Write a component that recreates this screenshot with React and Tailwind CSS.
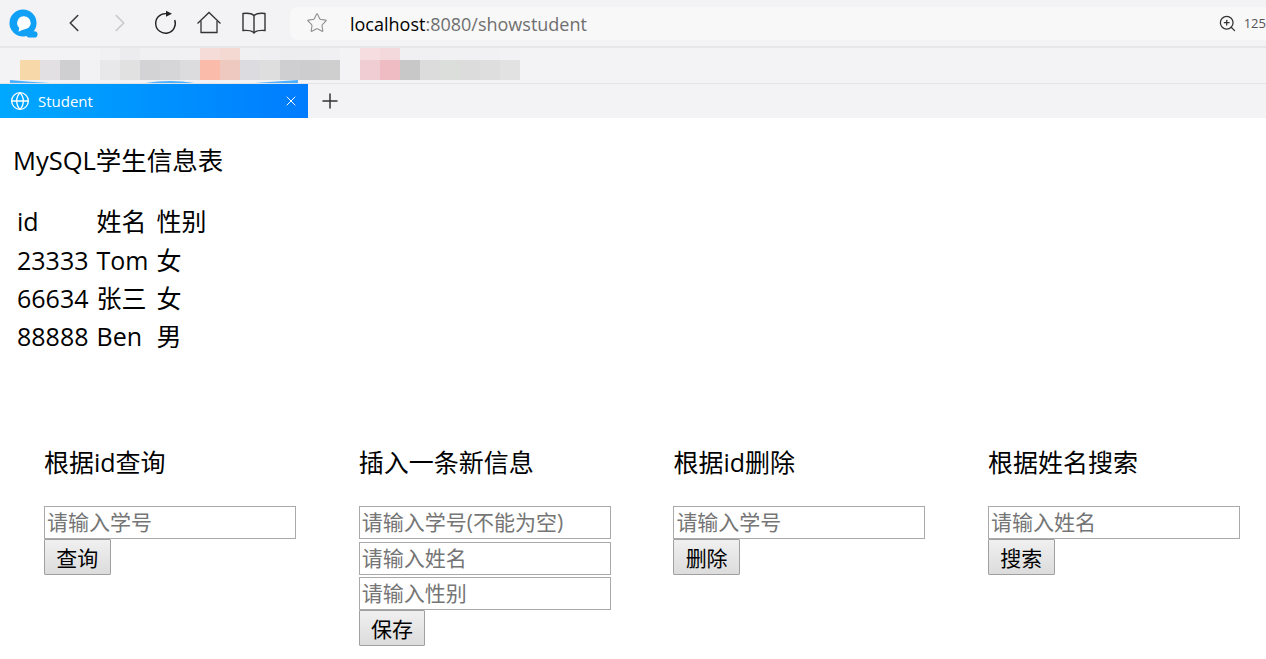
import { Globe, X, Plus, ChevronLeft, ChevronRight, Star, ZoomIn } from "lucide-react";

const FONT = "font-['Open_Sans','Noto_Sans_CJK_SC',sans-serif]";

const rows = [
  ["id", "姓名", "性别"],
  ["23333", "Tom", "女"],
  ["66634", "张三", "女"],
  ["88888", "Ben", "男"],
];

// blurred bookmarks: 20px mosaic blocks
const leftBlocks = ["#f7d8a8", "#e2e0e3", "#cfcfd1", "#f2f2f4", "#e8e8ea", "#e1e1e2", "#d3d3d5", "#d6d6d8", "#dcdcde", "#fabbaa", "#eec9bf", "#dcdce0", "#dedede", "#cfcfd1", "#cdcdcf", "#cfcfd0"];
const rightBlocks = ["#f0cdd3", "#eebcc2", "#c8c8c8", "#dcdcdc", "#dcdedc", "#dcdcdc", "#dedede", "#e2e2e3"];
const paleBlocks = ["#f3f3f5", "#f3f3f5", "#f3f3f5", "#f3f3f5", "#f1f1f3", "#ececee", "#f0f0f2", "#f0f0f2", "#f1f1f3", "#f5dcd8", "#f3d9d2", "#f0f0f2", "#efeff1", "#ededef", "#ededef", "#f0f0f2", "#f3f3f5", "#f5dde0", "#f3d8dc", "#f0f0f2", "#f0f0f2", "#f1f1f3", "#f1f1f3", "#f1f1f3", "#f2f2f4"];

const Panel = ({ title, fields, button }) => (
  <div className="w-[314.7px] shrink-0">
    <h2 className="text-[25px] leading-[34px] text-black">{title}</h2>
    <div className="mt-[27px] flex flex-col items-start">
      {fields.map((placeholder, i) => (
        <input
          key={placeholder}
          placeholder={placeholder}
          className={`w-[252px] h-[33px] border border-[#a9a9a9] bg-white px-[2px] pb-[1px] text-[21px] text-black placeholder:text-[#757575] outline-none ${i > 0 ? "mt-[2.5px]" : ""}`}
        />
      ))}
      <button className="h-[36px] w-[66.500px] pt-[2px] border border-[#a0a0a0] rounded-[1px] bg-gradient-to-b from-[#f0f0f0] to-[#dcdcdc] text-[21px] leading-none text-black">
        {button}
      </button>
    </div>
  </div>
);

export default function App() {
  return (
    <div className={`${FONT} w-[1266px] h-[659px] overflow-hidden bg-white`}>
      {/* toolbar */}
      <div className="h-[46px] bg-[#f3f3f5] flex items-center border-b-2 border-[#e6e6e8] box-content">
        <svg viewBox="0 0 30 30" className="ml-[9px] w-[29px] h-[29px]">
          <circle cx="14.5" cy="14.5" r="14" fill="#10a0f5" />
          <rect x="18" y="23" width="11.500" height="6.500" rx="3.200" fill="#10a0f5" />
          <path d="M15.500 7.500a7 7 0 0 1 7 7c0 3-1.800 5-4.500 6l-5 1.500-3.200 1.500.8-4a7 7 0 0 1 4.900-12z" fill="#fff" />
        </svg>
        <ChevronLeft strokeWidth={1.3} className="ml-[21px] w-[30px] h-[30px] text-[#3c3c3c]" />
        <ChevronRight strokeWidth={1.3} className="ml-[16px] w-[30px] h-[30px] text-[#c8c8ca]" />
        <svg viewBox="0 0 26 26" fill="none" stroke="#222" strokeWidth="1.4" className="ml-[17px] w-[26px] h-[26px]">
          <path d="M14 3.600A9.800 9.800 0 1 0 22.700 10" />
          <path d="M14 0.800l6 3-6 3z" fill="#222" stroke="none" />
        </svg>
        <svg viewBox="0 0 26 26" fill="none" stroke="#333" strokeWidth="1.3" className="ml-[18px] w-[26px] h-[26px]">
          <path d="M1.500 13.500L13 2.500l11.500 11" />
          <path d="M5 11v11.500h16V11" />
        </svg>
        <svg viewBox="0 0 26 26" fill="none" stroke="#333" strokeWidth="1.4" className="ml-[19px] w-[26px] h-[26px]">
          <path d="M13 5.500C11 3.500 6 3 2 3.500v17c4-.3 8 0 10 1.500l1 1 1-1c2-1.500 6-1.800 10-1.500v-17c-4-.5-9 0-11 2z" />
          <path d="M13 5.500V22" />
        </svg>
        <div className="ml-[23px] flex-1 h-[33px] bg-[#f8f8f8] rounded-l-lg flex items-center">
          <Star strokeWidth={1.2} className="ml-[16px] w-[22px] h-[22px] text-[#8f8f8f]" />
          <span className="ml-[22px] mt-[2px] text-[18px] text-[#6f6f6f]">
            <span className="text-black">localhost</span>:8080/showstudent
          </span>
          <ZoomIn strokeWidth={1.600} className="ml-auto mt-[1px] w-[19px] h-[19px] text-[#333]" />
          <span className="ml-[7px] mt-[1px] text-[13px] leading-none text-[#555]">125</span>
        </div>
      </div>

      {/* bookmarks, blurred out in the source picture */}
      <div className="h-[36px] bg-[#f3f3f5] border-b border-[#e4e4e6] overflow-hidden">
        <div className="ml-[20px] flex">
          {paleBlocks.map((c, i) => (
            <div key={i} className="w-[20px] h-[12px]" style={{ backgroundColor: c }} />
          ))}
        </div>
        <div className="ml-[20px] flex">
          <div className="flex">
            {leftBlocks.map((c, i) => (
              <div key={i} className="w-[20px] h-[20px]" style={{ backgroundColor: c }} />
            ))}
          </div>
          <div className="ml-[20px] flex">
            {rightBlocks.map((c, i) => (
              <div key={i} className="w-[20px] h-[20px]" style={{ backgroundColor: c }} />
            ))}
          </div>
        </div>
        <svg viewBox="0 0 308 4" className="block w-[308px] h-[4px]">
          <path d="M10 0q40 4 80 4h50q15-3 30-3t30 3h40q30-2 58-4v4H10z" fill="#4db0ff" />
        </svg>
      </div>

      {/* tabs */}
      <div className="h-[34px] bg-[#f3f3f5] flex items-center">
        <div className="w-[308px] h-full bg-gradient-to-r from-[#00a8ff] to-[#007cff] flex items-center text-white">
          <Globe strokeWidth={1.6} className="ml-[10px] w-[20px] h-[20px]" />
          <span className="ml-[8px] mt-[1px] text-[15px] font-medium">Student</span>
          <X strokeWidth={1.5} className="ml-auto mr-[9px] w-[16px] h-[16px]" />
        </div>
        <Plus strokeWidth={1.5} className="ml-[10px] w-[24px] h-[24px] text-[#333]" />
      </div>

      {/* page */}
      <div className="pl-[13px] text-black">
        <h1 className="pt-[25px] text-[25.5px] leading-[34px]">MySQL学生信息表</h1>
        <table className="mt-[26px] ml-[2px] text-[25px] border-separate border-spacing-0">
          <tbody>
            {rows.map((row) => (
              <tr key={row[0]} className="h-[38.3px]">
                <td className="pl-[2px] pr-[8px]">{row[0]}</td>
                <td className="pr-[8px]">{row[1]}</td>
                <td>{row[2]}</td>
              </tr>
            ))}
          </tbody>
        </table>
        <div className="mt-[89px] pl-[31px] flex">
          <Panel title="根据id查询" fields={["请输入学号"]} button="查询" />
          <Panel title="插入一条新信息" fields={["请输入学号(不能为空)", "请输入姓名", "请输入性别"]} button="保存" />
          <Panel title="根据id删除" fields={["请输入学号"]} button="删除" />
          <Panel title="根据姓名搜索" fields={["请输入姓名"]} button="搜索" />
        </div>
      </div>
    </div>
  );
}
